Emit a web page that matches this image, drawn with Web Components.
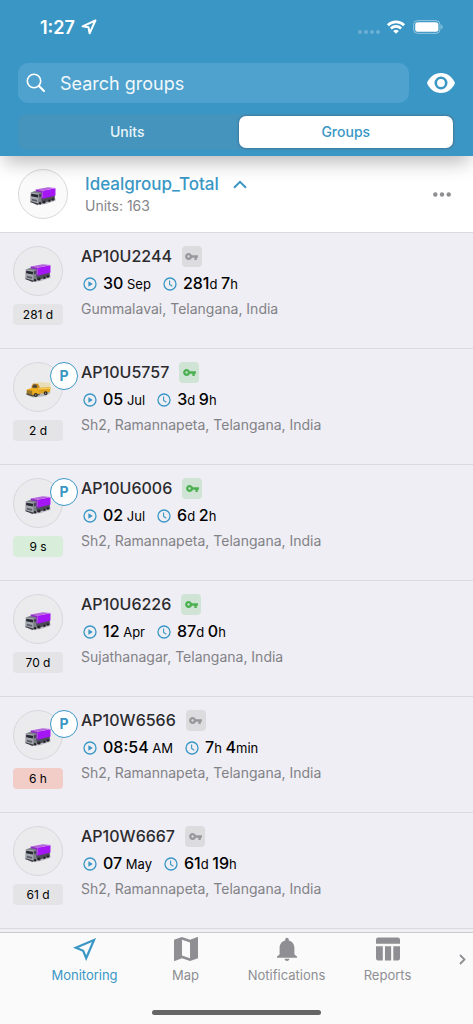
<!DOCTYPE html>
<html lang="en">
<head>
<meta charset="utf-8">
<meta name="viewport" content="width=device-width, initial-scale=1">
<title>Monitoring</title>
<style>
    :root {
        --accent: #3a97c5;
        --muted: #8e8e93;
        --line: #d9d9de;
    }
    body {
        margin: 0;
        font-family: Inter, 'Liberation Sans', sans-serif;
        color: #000;
        background: #efeef4;
    }
</style>
</head>
<body>
<monitoring-app></monitoring-app>

<script>
const ICONS = Object.freeze({
    location: '<svg viewBox="0 0 24 24"><path d="M21 3 2.8 10.8l7.4 3 3 7.4z" fill="none" stroke="currentColor" stroke-width="2.2" stroke-linejoin="miter"/></svg>',
    arrow: '<svg viewBox="0 0 16 16"><path d="M14.400 1.500 1.600 7.300l5.900 1 1.100 6z" fill="none" stroke="currentColor" stroke-width="2" stroke-linejoin="round"/></svg>',
    signal: '<svg viewBox="0 0 22 4"><g fill="currentColor" opacity=".25"><circle cx="2" cy="2" r="2"/><circle cx="8" cy="2" r="2"/><circle cx="14" cy="2" r="2"/><circle cx="20" cy="2" r="2"/></g></svg>',
    wifi: '<svg viewBox="0 0 18 14"><g fill="none" stroke="currentColor" stroke-width="2.6"><path d="M.9 5.200a11.600 11.600 0 0 1 16.200 0"/><path d="M3.900 8.500a7.300 7.300 0 0 1 10.200 0"/></g><path d="M9 13.800 6.200 11a4 4 0 0 1 5.600 0z" fill="currentColor"/></svg>',
    battery: '<svg viewBox="0 0 30 14"><rect x=".6" y=".6" width="26.4" height="12.8" rx="4" fill="none" stroke="currentColor" opacity=".45"/><rect x="2.2" y="2.2" width="23.2" height="9.6" rx="2.5" fill="currentColor"/><path d="M28.4 4.8c1.5.5 1.5 3.9 0 4.4z" fill="currentColor" opacity=".5"/></svg>',
    search: '<svg viewBox="0 0 20 20"><circle cx="8" cy="8" r="6.700" fill="none" stroke="currentColor" stroke-width="1.600"/><path d="m13 13 5 5" stroke="currentColor" stroke-width="2.200" stroke-linecap="round"/></svg>',
    eye: '<svg viewBox="0 0 28 20"><path fill="currentColor" fill-rule="evenodd" d="M14 0C7.600 0 2.400 4 0 10c2.400 6 7.600 10 14 10s11.600-4 14-10C25.600 4 20.400 0 14 0zm0 16.500a6.500 6.500 0 1 1 0-13 6.500 6.500 0 0 1 0 13zm0-2.600a3.900 3.900 0 1 0 0-7.800 3.900 3.900 0 0 0 0 7.800z"/></svg>',
    up: '<svg viewBox="0 0 14 9"><path d="m1 7.800 6-6 6 6" fill="none" stroke="currentColor" stroke-width="2"/></svg>',
    right: '<svg viewBox="0 0 7 11"><path d="m1 1 4.500 4.500L1 10" fill="none" stroke="currentColor" stroke-width="1.800"/></svg>',
    more: '<svg viewBox="0 0 18 5"><g fill="currentColor"><circle cx="2.300" cy="2.500" r="2.200"/><circle cx="9" cy="2.500" r="2.200"/><circle cx="15.700" cy="2.500" r="2.200"/></g></svg>',
    play: '<svg viewBox="0 0 14 14"><circle cx="7" cy="7" r="6" fill="none" stroke="currentColor" stroke-width="1.300"/><path d="M5.400 4.200v5.600L9.800 7z" fill="currentColor"/></svg>',
    clock: '<svg viewBox="0 0 14 14"><circle cx="7" cy="7" r="6" fill="none" stroke="currentColor" stroke-width="1.300"/><path d="M6.600 3.500v4L9.300 9.200" fill="none" stroke="currentColor" stroke-width="1.100"/></svg>',
    key: '<svg viewBox="0 0 22 12"><path fill="currentColor" d="M11.650 4A6 6 0 1 0 11.650 8H16v4h4V8h2V4zM6 8a2 2 0 1 1 0-4 2 2 0 0 1 0 4z"/></svg>',
    map: '<svg viewBox="0 0 22 22"><path fill="currentColor" fill-rule="evenodd" d="M21.400 0 14.700 2.600 7.300 0 .6 2.300Q0 2.500 0 3v18.400q0 .7.700.6l6.600-2.600 7.400 2.600 6.700-2.300q.6-.2.600-.7V.6q0-.7-.6-.6zM7.300 2.500l7.400 2.600v14.400l-7.400-2.600z"/></svg>',
    bell: '<svg viewBox="0 0 20 24"><path fill="currentColor" d="M10 24c1.400 0 2.400-.9 2.400-2.200H7.600C7.600 23.100 8.600 24 10 24zm7.400-6.600v-6.200c0-4-2-6.900-5.600-7.700v-.8C11.800 1.600 11 .7 10 .7s-1.800.9-1.800 2v.8C4.600 4.300 2.600 7.200 2.600 11.200v6.200L0 19.600v1.200h20v-1.200z"/></svg>',
    table: '<svg viewBox="0 0 23 22"><path fill="currentColor" d="M2.200 0h18.600Q23 0 23 2.200V6H0V2.200Q0 0 2.200 0zM0 8.400h6.500V22H2.200Q0 22 0 19.800zm8.600 0h5.900V22H8.600zm8 0H23v11.400q0 2.200-2.200 2.200h-4.200z"/></svg>'
});

const VEHICLES = Object.freeze({
    truck: `<svg viewBox="0 0 150 150">
        <path d="M40 101 55 110 84 106 114 96 114 88 70 92z" fill="#b9b8bd"/>
        <path d="M66 88 112 76 112 92 72 104z" fill="#4d4c58"/>
        <circle cx="78" cy="100" r="5" fill="#25242c"/><circle cx="95" cy="96" r="4" fill="#25242c"/><circle cx="106" cy="92" r="4" fill="#25242c"/>
        <path d="M52 61 90 54 114 56 74 65z" fill="#b765dd"/>
        <path d="M52 61 74 65 74 90 52 78z" fill="#8a2cc0"/>
        <path d="M74 65 114 57 114 80 74 90z" fill="#a516f5"/>
        <path d="M37 70 49 66 70 70 70 103 60 108 36 99z" fill="#7c7e87"/>
        <path d="M37 70 61 73 60 108 36 99z" fill="#a5a7af"/>
        <path d="M38 74 60 77 59 86 38 82z" fill="#24262f"/>
        <path d="M63 76 69 75 69 83 63 85z" fill="#3c3f4c"/>
        <path d="M40 90 57 94 56 99 40 95z" fill="#595b65"/>
        <path d="M36 98 60 105 60 109 36 101z" fill="#3d3e46"/>
        <circle cx="66" cy="104" r="4" fill="#222229"/>
    </svg>`,
    pickup: `<svg viewBox="0 0 150 150">
        <path d="M42 101 60 108 98 103 114 94 110 88z" fill="#b7b6bb"/>
        <path d="M69 62 83 59 114 62 114 78 77 78z" fill="#e8dfb9"/>
        <path d="M76 77 114 76 113 91 77 97z" fill="#dda220"/>
        <path d="M55 72 60 64 75 65 80 74 78 82 55 80z" fill="#cc8c22"/>
        <path d="M58 72 62 67 71 68 72 77 58 77z" fill="#49473b"/>
        <path d="M40 83 55 78 78 79 80 98 58 102 40 96z" fill="#efad22"/>
        <path d="M40 84 57 87 57 101 40 96z" fill="#9b7628"/>
        <path d="M76 81 113 79" stroke="#f8cd51" stroke-width="4"/>
        <path d="M39 94 58 100 80 96 80 100 58 105 39 99z" fill="#56524b"/>
        <circle cx="68" cy="100" r="6" fill="#292823"/><circle cx="68" cy="100" r="2" fill="#cbc7ba"/>
        <circle cx="99" cy="94" r="6" fill="#292823"/><circle cx="99" cy="94" r="2" fill="#cbc7ba"/>
    </svg>`
});

const UNITS = Object.freeze([
    { name: 'AP10U2244', key: 'off', vehicle: 'truck', parked: false, age: '281 d', tone: 'idle', start: '30 Sep', span: '281d 7h', place: 'Gummalavai, Telangana, India' },
    { name: 'AP10U5757', key: 'on', vehicle: 'pickup', parked: true, age: '2 d', tone: 'idle', start: '05 Jul', span: '3d 9h', place: 'Sh2, Ramannapeta, Telangana, India' },
    { name: 'AP10U6006', key: 'on', vehicle: 'truck', parked: true, age: '9 s', tone: 'fresh', start: '02 Jul', span: '6d 2h', place: 'Sh2, Ramannapeta, Telangana, India' },
    { name: 'AP10U6226', key: 'on', vehicle: 'truck', parked: false, age: '70 d', tone: 'idle', start: '12 Apr', span: '87d 0h', place: 'Sujathanagar, Telangana, India' },
    { name: 'AP10W6566', key: 'off', vehicle: 'truck', parked: true, age: '6 h', tone: 'late', start: '08:54 AM', span: '7h 4min', place: 'Sh2, Ramannapeta, Telangana, India' },
    { name: 'AP10W6667', key: 'off', vehicle: 'truck', parked: false, age: '61 d', tone: 'idle', start: '07 May', span: '61d 19h', place: 'Sh2, Ramannapeta, Telangana, India' }
]);

class UiIcon extends HTMLElement {
    connectedCallback() {
        if (this.shadowRoot) return;
        this.attachShadow({ mode: 'open' }).innerHTML = `
            <style>
                :host { display: block; flex: none; }
                svg { display: block; width: 100%; height: 100%; }
            </style>
            ${ICONS[this.getAttribute('name')] || ''}
        `;
    }
}
customElements.define('ui-icon', UiIcon);

class VehicleAvatar extends HTMLElement {
    connectedCallback() {
        if (this.shadowRoot) return;
        this.attachShadow({ mode: 'open' }).innerHTML = `
            <style>
                :host {
                    display: block;
                    flex: none;
                    box-sizing: border-box;
                    width: 50px;
                    height: 50px;
                    border: 1px solid #d8d8dc;
                    border-radius: 50%;
                    background: var(--avatar-bg, #ebebee);
                }
                svg { display: block; width: 100%; height: 100%; }
            </style>
            ${VEHICLES[this.getAttribute('kind')] || VEHICLES.truck}
        `;
    }
}
customElements.define('vehicle-avatar', VehicleAvatar);

class StatusBar extends HTMLElement {
    connectedCallback() {
        this.attachShadow({ mode: 'open' }).innerHTML = `
            <style>
                :host {
                    display: flex;
                    align-items: center;
                    height: 54px;
                    padding: 0 30px 0 40px;
                    color: #fff;
                }
                time { font-size: 18px; font-weight: 600; margin-right: 6px; }
                .place { width: 16px; height: 16px; margin-right: auto; }
                .signal { width: 22px; height: 4px; margin: 10px 7px 0 0; }
                .wifi { width: 18px; height: 14px; margin-right: 8px; }
                .battery { width: 30px; height: 14px; }
            </style>
            <time>1:27</time>
            <ui-icon class="place" name="arrow"></ui-icon>
            <ui-icon class="signal" name="signal"></ui-icon>
            <ui-icon class="wifi" name="wifi"></ui-icon>
            <ui-icon class="battery" name="battery"></ui-icon>
        `;
    }
}
customElements.define('status-bar', StatusBar);

class GroupSearch extends HTMLElement {
    connectedCallback() {
        this.attachShadow({ mode: 'open' }).innerHTML = `
            <style>
                :host { display: flex; align-items: center; padding: 0 18px; gap: 18px; }
                label {
                    flex: 1;
                    min-width: 0;
                    display: flex;
                    align-items: center;
                    gap: 14px;
                    height: 40px;
                    padding: 0 8px;
                    box-sizing: border-box;
                    border-radius: 10px;
                    background: #4fa2ce;
                    color: #fff;
                }
                label ui-icon { width: 20px; height: 20px; }
                input {
                    flex: 1;
                    min-width: 0;
                    border: 0;
                    padding: 2px 0 0;
                    outline: none;
                    background: none;
                    color: #fff;
                    font: 400 18px/24px Inter, sans-serif;
                }
                input::placeholder { color: #f1f8fb; opacity: 1; }
                button { border: 0; padding: 0; background: none; color: #fff; }
                button ui-icon { width: 28px; height: 20px; }
            </style>
            <label>
                <ui-icon name="search"></ui-icon>
                <input type="text" placeholder="Search groups" aria-label="Search groups">
            </label>
            <button type="button" aria-label="Visibility"><ui-icon name="eye"></ui-icon></button>
        `;
    }
}
customElements.define('group-search', GroupSearch);

class SegmentControl extends HTMLElement {
    connectedCallback() {
        this.attachShadow({ mode: 'open' }).innerHTML = `
            <style>
                :host {
                    display: grid;
                    grid-template-columns: 1fr 1fr;
                    column-gap: 4px;
                    margin: 0 18px;
                    padding: 2px;
                    border-radius: 8px;
                    background: #4594bd;
                }
                button {
                    height: 32px;
                    border: 0;
                    border-radius: 7px;
                    background: none;
                    color: #e9f4f9;
                    font: 500 14px/20px Inter, sans-serif;
                }
                button[aria-pressed="true"] {
                    background: #fff;
                    color: var(--accent);
                    box-shadow: 0 0 3px rgba(0, 0, 0, .35);
                }
            </style>
            <button type="button" aria-pressed="false">Units</button>
            <button type="button" aria-pressed="true">Groups</button>
        `;
        this.buttons = [...this.shadowRoot.querySelectorAll('button')];
        this.buttons.forEach((button) => {
            button.addEventListener('click', () => {
                this.buttons.forEach((b) => b.setAttribute('aria-pressed', String(b === button)));
            });
        });
    }
}
customElements.define('segment-control', SegmentControl);

class GroupHeader extends HTMLElement {
    connectedCallback() {
        this.attachShadow({ mode: 'open' }).innerHTML = `
            <style>
                :host {
                    --avatar-bg: #fafafa;
                    display: flex;
                    align-items: center;
                    gap: 17px;
                    box-sizing: border-box;
                    height: 77px;
                    padding: 0 22px 0 18px;
                    border-bottom: 1px solid var(--line);
                    background: #fff;
                }
                .info { flex: 1; min-width: 0; padding-top: 2px; }
                button { border: 0; padding: 0; background: none; color: var(--muted); font: inherit; }
                .title {
                    display: flex;
                    align-items: center;
                    gap: 14px;
                    color: var(--accent);
                    font-size: 17px;
                    line-height: 22px;
                    font-weight: 500;
                }
                .title ui-icon { width: 14px; height: 9px; }
                .count { color: #85858a; font-size: 14px; line-height: 22px; }
                .more ui-icon { width: 18px; height: 5px; }
            </style>
            <vehicle-avatar kind="truck"></vehicle-avatar>
            <div class="info">
                <button class="title" type="button" aria-expanded="true"><slot name="title"></slot><ui-icon name="up"></ui-icon></button>
                <div class="count"><slot></slot></div>
            </div>
            <button class="more" type="button" aria-label="More"><ui-icon name="more"></ui-icon></button>
        `;
    }
}
customElements.define('group-header', GroupHeader);

class UnitRow extends HTMLElement {
    set unit(value) {
        this.data = value;
        if (this.isConnected) this.render();
    }

    connectedCallback() {
        if (!this.shadowRoot) this.attachShadow({ mode: 'open' });
        if (this.data) this.render();
    }

    // Digits are drawn larger than the units that follow them
    amount(text) {
        return text.replace(/[\d:]+/g, '<b>$&</b>');
    }

    render() {
        const u = this.data;
        this.shadowRoot.innerHTML = `
            <style>
                :host {
                    display: flex;
                    gap: 18px;
                    box-sizing: border-box;
                    height: 116px;
                    padding: 12px 13px;
                    border-bottom: 1px solid var(--line);
                }
                .side {
                    position: relative;
                    display: flex;
                    flex-direction: column;
                    gap: 8px;
                    width: 50px;
                    padding-top: 1px;
                }
                .parked {
                    position: absolute;
                    top: 1px;
                    left: 37px;
                    box-sizing: border-box;
                    width: 28px;
                    height: 28px;
                    border: 1px solid var(--accent);
                    border-radius: 50%;
                    background: #fff;
                    color: var(--accent);
                    font-size: 14px;
                    line-height: 26px;
                    font-weight: 700;
                    text-align: center;
                }
                .age {
                    border-radius: 4px;
                    font-size: 12px;
                    line-height: 21px;
                    text-align: center;
                }
                .idle { background: #e4e4e6; }
                .fresh { background: #d9eeda; }
                .late { background: #f2cdc8; }
                .info { flex: 1; min-width: 0; }
                .name {
                    display: flex;
                    align-items: center;
                    gap: 10px;
                    color: #2b2b2e;
                    font-size: 16px;
                    line-height: 22px;
                    font-weight: 500;
                }
                .key {
                    display: grid;
                    place-items: center;
                    width: 20px;
                    height: 21px;
                    border-radius: 4px;
                }
                .key ui-icon { width: 13px; height: 7px; }
                .off { background: #dcdcdf; color: #98989c; }
                .on { background: #cfe4d4; color: #4caf50; }
                .times { display: flex; align-items: center; margin: 5px 0 4px 2px; line-height: 22px; font-size: 13px; }
                .times ui-icon { width: 14px; height: 14px; margin-right: 6px; color: var(--accent); }
                .times span + ui-icon { margin-left: 12px; }
                b { font-size: 16px; font-weight: 500; }
                .place { color: #828286; font-size: 14px; line-height: 20px; }
            </style>
            <div class="side">
                <vehicle-avatar kind="${u.vehicle}"></vehicle-avatar>
                ${u.parked ? '<span class="parked">P</span>' : ''}
                <div class="age ${u.tone}">${u.age}</div>
            </div>
            <div class="info">
                <div class="name">${u.name}<span class="key ${u.key}"><ui-icon name="key"></ui-icon></span></div>
                <div class="times">
                    <ui-icon name="play"></ui-icon><span>${this.amount(u.start)}</span>
                    <ui-icon name="clock"></ui-icon><span>${this.amount(u.span)}</span>
                </div>
                <div class="place">${u.place}</div>
            </div>
        `;
    }
}
customElements.define('unit-row', UnitRow);

class TabBar extends HTMLElement {
    connectedCallback() {
        this.attachShadow({ mode: 'open' }).innerHTML = `
            <style>
                :host {
                    display: block;
                    box-sizing: border-box;
                    padding-bottom: 9px;
                    border-top: 1px solid #c9c9cd;
                    background: #fafafa;
                }
                nav {
                    display: grid;
                    grid-template-columns: repeat(4, 1fr) 28px;
                    align-items: center;
                    padding: 0 7px 0 34px;
                }
                a {
                    display: flex;
                    flex-direction: column;
                    align-items: center;
                    gap: 4px;
                    padding-top: 4px;
                    color: var(--muted);
                    font-size: 13px;
                    line-height: 20px;
                    text-decoration: none;
                }
                a[aria-current] { color: var(--accent); }
                a ui-icon { width: 24px; height: 24px; }
                button {
                    display: flex;
                    justify-content: flex-end;
                    border: 0;
                    padding: 0;
                    background: none;
                    color: var(--muted);
                }
                button ui-icon { width: 7px; height: 11px; }
                .home {
                    width: 169px;
                    height: 5px;
                    margin: 25px auto 0;
                    border-radius: 3px;
                    background: #656565;
                }
            </style>
            <nav>
                <a href="#monitoring" aria-current="page"><ui-icon name="location"></ui-icon>Monitoring</a>
                <a href="#map"><ui-icon name="map"></ui-icon>Map</a>
                <a href="#notifications"><ui-icon name="bell"></ui-icon>Notifications</a>
                <a href="#reports"><ui-icon name="table"></ui-icon>Reports</a>
                <button type="button" aria-label="Next tabs"><ui-icon name="right"></ui-icon></button>
            </nav>
            <div class="home"></div>
        `;
    }
}
customElements.define('tab-bar', TabBar);

class MonitoringApp extends HTMLElement {
    connectedCallback() {
        this.attachShadow({ mode: 'open' }).innerHTML = `
            <style>
                :host { display: flex; flex-direction: column; height: 100vh; }
                header {
                    position: relative;
                    z-index: 1;
                    padding-bottom: 6px;
                    background: var(--accent);
                    box-shadow: 0 10px 18px -4px rgba(0, 0, 0, .28);
                }
                group-search { margin: 9px 0 11px; }
                main { flex: 1; min-height: 0; overflow-y: auto; }
            </style>
            <header>
                <status-bar></status-bar>
                <group-search></group-search>
                <segment-control></segment-control>
            </header>
            <main>
                <group-header><span slot="title">Idealgroup_Total</span>Units: 163</group-header>
            </main>
            <tab-bar></tab-bar>
        `;
        const list = this.shadowRoot.querySelector('main');
        UNITS.forEach((unit) => {
            const row = document.createElement('unit-row');
            row.unit = unit;
            list.append(row);
        });
    }
}
customElements.define('monitoring-app', MonitoringApp);
</script>
</body>
</html>
